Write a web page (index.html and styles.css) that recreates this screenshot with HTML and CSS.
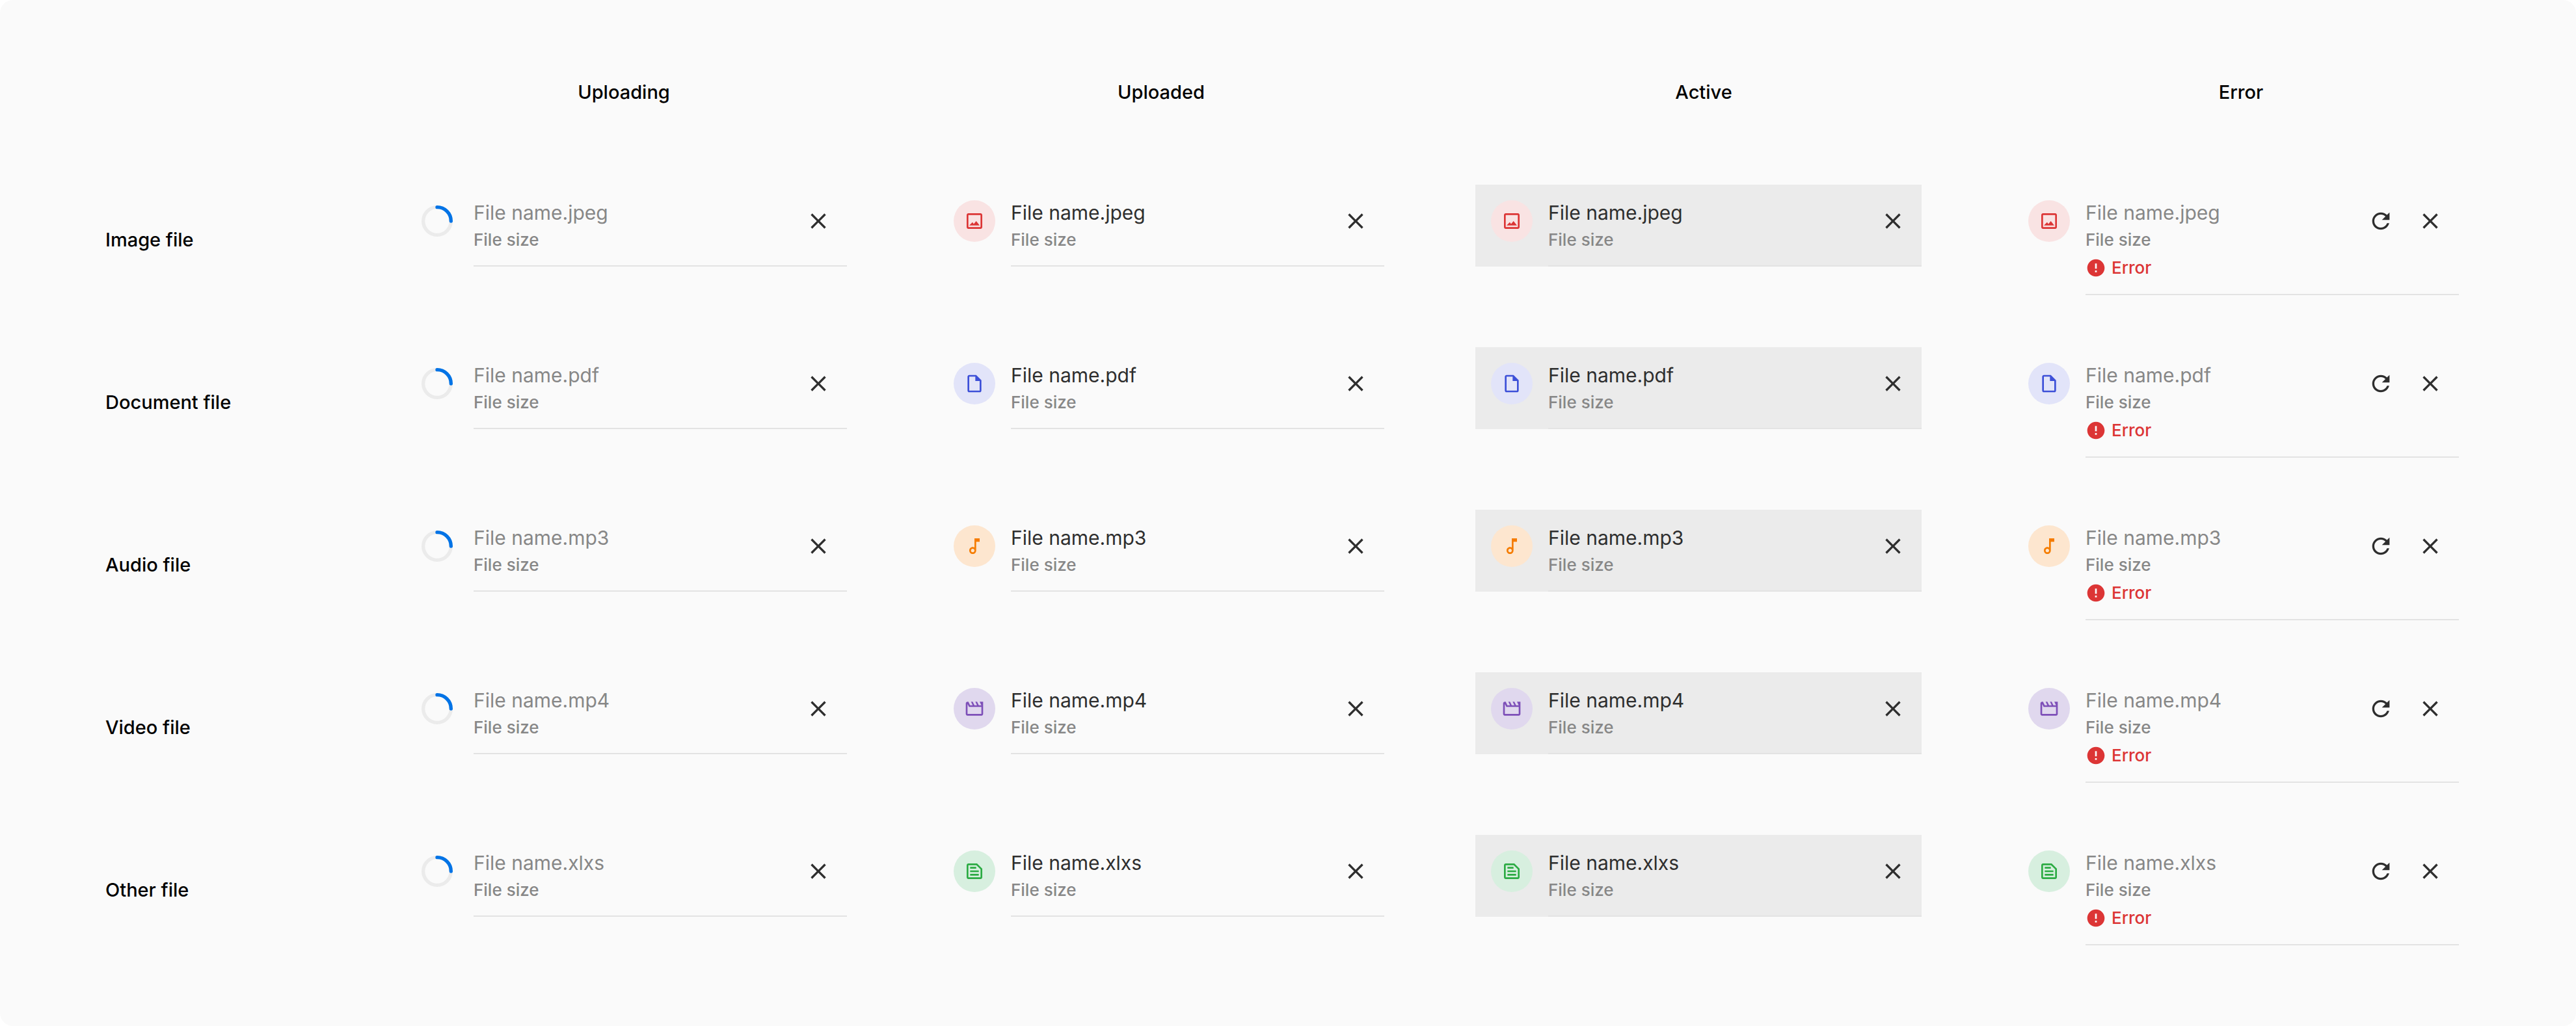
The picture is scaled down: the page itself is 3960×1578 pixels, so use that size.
FILE: index.html
```html
<!DOCTYPE html>
<html lang="en">
<head>
<meta charset="utf-8">
<title>File upload states</title>
<link rel="stylesheet" href="styles.css">
</head>
<body>
<svg class="sprite" aria-hidden="true">
  <symbol id="i-image" viewBox="0 0 24 24"><path d="M19 5v14H5V5h14m0-2H5c-1.100 0-2 .9-2 2v14c0 1.100.9 2 2 2h14c1.100 0 2-.9 2-2V5c0-1.100-.9-2-2-2zM14 12l-2.800 3.400L9.700 13.400 6 17h12z"/></symbol>
  <symbol id="i-doc" viewBox="0 0 24 24"><path d="M14 2H6c-1.100 0-2 .9-2 2v16c0 1.100.89 2 2 2h12c1.100 0 2-.9 2-2V8l-6-6zM6 20V4h7v5h5v11H6z"/></symbol>
  <symbol id="i-audio" viewBox="0 0 24 24"><path d="M12 3v10.550c-.59-.34-1.270-.55-2-.55-2.210 0-4 1.790-4 4s1.790 4 4 4 4-1.790 4-4V7h4V3h-6zM10 19c-1.100 0-2-.9-2-2s.9-2 2-2 2 .9 2 2-.9 2-2 2z"/></symbol>
  <symbol id="i-video" viewBox="0 0 24 24"><path d="M4 6.470 5.760 10H20v8H4V6.470M22 4h-4l2 4h-3l-2-4h-2l2 4h-3l-2-4H8l2 4H7L5 4H4c-1.100 0-1.990.9-1.990 2L2 18c0 1.100.9 2 2 2h16c1.100 0 2-.9 2-2V4z"/></symbol>
  <symbol id="i-other" viewBox="0 0 24 24"><path d="M15 3H5c-1.100 0-2 .9-2 2v14c0 1.100.89 2 2 2h14c1.100 0 2-.9 2-2V9l-6-6zM5 19V5h9.200L19 9.800V19H5zM7 7h7v2H7zM7 11h10v2H7zM7 15h10v2H7z"/></symbol>
  <symbol id="i-close" viewBox="0 0 24 24"><path d="M19 6.410 17.590 5 12 10.590 6.410 5 5 6.410 10.590 12 5 17.590 6.410 19 12 13.410 17.590 19 19 17.590 13.410 12z"/></symbol>
  <symbol id="i-refresh" viewBox="0 0 24 24"><path d="M17.650 6.350C16.200 4.900 14.210 4 12 4c-4.420 0-7.990 3.580-7.990 8s3.570 8 7.990 8c3.730 0 6.840-2.550 7.730-6h-2.080c-.82 2.330-3.040 4-5.650 4-3.310 0-6-2.690-6-6s2.690-6 6-6c1.660 0 3.140.69 4.220 1.780L13 11h7V4l-2.350 2.350z"/></symbol>
  <symbol id="i-error" viewBox="0 0 24 24"><path d="M12 2C6.480 2 2 6.480 2 12s4.480 10 10 10 10-4.480 10-10S17.520 2 12 2zm1 15h-2v-2h2v2zm0-4h-2V7h2v6z"/></symbol>
  <symbol id="i-spinner" viewBox="0 0 48 48"><circle cx="24" cy="24" r="21.330" fill="none" stroke="#ebebeb" stroke-width="5.330"/><path d="M24 2.670A21.330 21.330 0 0 1 45.330 24" fill="none" stroke="#0073e6" stroke-width="5.330" stroke-linecap="round"/></symbol>
</svg>
<main class="board" id="board"></main>
<script src="app.js"></script>
</body>
</html>
```
FILE: styles.css
```css
* {
  box-sizing: border-box;
}

body {
  margin: 0;
  background: #fff;
  font-family: Inter, "Liberation Sans", sans-serif;
  font-weight: 500;
  color: #000;
}

.sprite {
  display: none;
}

.board {
  display: grid;
  grid-template-columns: 314fr repeat(4, 686fr);
  column-gap: 140px;
  row-gap: 80px;
  min-height: 100vh;
  padding: 120px 180px 124px 162px;
  border-radius: 20px;
  background: #fafafa;
  align-content: start;
}

.column-title,
.row-title {
  margin: 0;
  font-size: 29px;
  line-height: 44px;
  font-weight: 500;
}

.column-title {
  padding-bottom: 40px;
  text-align: center;
}

.column-title-active,
.column-title-error {
  padding-left: 16px;
}

.row-title {
  align-self: center;
}

.file {
  display: flex;
  align-self: start;
  gap: 24px;
  padding-left: 24px;
}

.file-active {
  background: #ebebeb;
}

.badge {
  display: flex;
  flex: none;
  align-items: center;
  justify-content: center;
  width: 64px;
  height: 64px;
  margin-top: 24px;
  border-radius: 50%;
}

.icon {
  width: 32px;
  height: 32px;
  flex: none;
  fill: currentColor;
}

.badge-image { background: #f9e3e3; color: #dc3535; }
.badge-doc { background: #e2e4f9; color: #3d50d8; }
.badge-audio { background: #fde6cf; color: #f57c00; }
.badge-video { background: #e0d8ee; color: #7d4fb8; }
.badge-other { background: #d7efdf; color: #2bab43; }

.spinner {
  width: 48px;
  height: 48px;
}

.content {
  display: flex;
  flex: 1;
  align-items: flex-start;
  justify-content: space-between;
  padding: 24px 24px 16px 0;
  border-bottom: 2px solid #e3e3e3;
}

.name,
.size,
.error {
  margin: 0;
}

.name {
  font-size: 30px;
  line-height: 38px;
  font-weight: 400;
  color: #2e2e2e;
}

.file-uploading .name,
.file-error .name {
  color: #878787;
}

.size,
.error {
  font-size: 26px;
  line-height: 46px;
  color: #878787;
}

.error {
  display: flex;
  align-items: center;
  gap: 8px;
  line-height: 40px;
  padding-bottom: 4px;
  color: #dc3535;
}

.actions {
  display: flex;
  gap: 36px;
  padding-top: 12px;
}

.action {
  display: flex;
  padding: 0;
  border: 0;
  background: none;
  color: #2e2e2e;
  cursor: pointer;
}

.action .icon {
  width: 40px;
  height: 40px;
}
```
FILE: app.js
```js
const states = ["Uploading", "Uploaded", "Active", "Error"];
const files = [
  ["Image file", "jpeg", "image"],
  ["Document file", "pdf", "doc"],
  ["Audio file", "mp3", "audio"],
  ["Video file", "mp4", "video"],
  ["Other file", "xlxs", "other"],
];

const icon = (name, extra = "") =>
  `<svg class="icon ${extra}" aria-hidden="true"><use href="#i-${name}"/></svg>`;

const action = (name, label) =>
  `<button class="action" type="button" aria-label="${label}">${icon(name)}</button>`;

const file = (state, ext, type) => {
  const uploading = state === "Uploading";
  const failed = state === "Error";
  return `<article class="file file-${state.toLowerCase()}">
    <div class="badge ${uploading ? "" : "badge-" + type}">${uploading ? icon("spinner", "spinner") : icon(type)}</div>
    <div class="content">
      <div>
        <p class="name">File name.${ext}</p>
        <p class="size">File size</p>
        ${failed ? `<p class="error">${icon("error")}Error</p>` : ""}
      </div>
      <div class="actions">${failed ? action("refresh", "Retry") : ""}${action("close", "Remove")}</div>
    </div>
  </article>`;
};

document.getElementById("board").innerHTML =
  "<div></div>" +
  states.map((s) => `<h2 class="column-title column-title-${s.toLowerCase()}">${s}</h2>`).join("") +
  files
    .map(([title, ext, type]) =>
      `<h3 class="row-title">${title}</h3>` + states.map((s) => file(s, ext, type)).join(""))
    .join("");
```
